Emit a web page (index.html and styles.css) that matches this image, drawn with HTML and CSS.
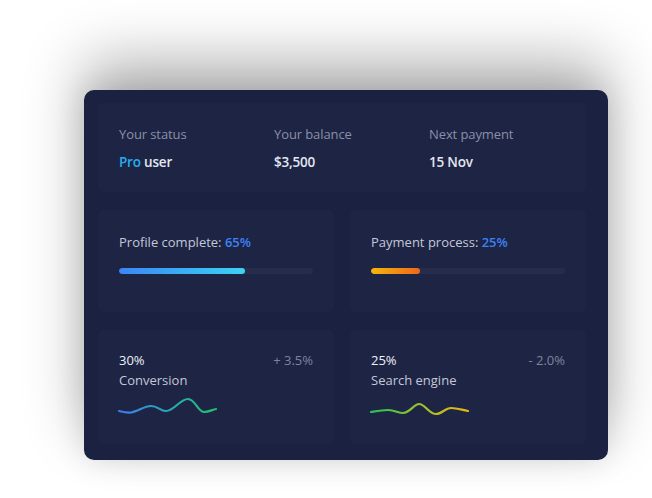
FILE: index.html
```html
<!DOCTYPE html>
<html>
<head>
<meta charset="utf-8">
<link rel="stylesheet" href="styles.css">
</head>
<body>
<div class="stage">
  <div class="card">
    <section class="panel status">
      <div class="col">
        <div class="label">Your status</div>
        <div class="value"><span class="pro">Pro</span> user</div>
      </div>
      <div class="col">
        <div class="label">Your balance</div>
        <div class="value">$3,500</div>
      </div>
      <div class="col">
        <div class="label">Next payment</div>
        <div class="value">15 Nov</div>
      </div>
    </section>
    <div class="grid">
      <section class="panel prog">
        <div class="ptitle">Profile complete: <span class="pct">65%</span></div>
        <div class="track"><div class="fill blue" style="width:65%"></div></div>
      </section>
      <section class="panel prog">
        <div class="ptitle">Payment process: <span class="pct">25%</span></div>
        <div class="track"><div class="fill orange" style="width:25%"></div></div>
      </section>
      <section class="panel stat">
        <div class="row">
          <div class="big">30%</div>
          <div class="delta">+ 3.5%</div>
        </div>
        <div class="name">Conversion</div>
        <svg class="spark" width="100" height="20" viewBox="0 0 100 20">
          <defs>
            <linearGradient id="g1" x1="0" y1="0" x2="1" y2="0">
              <stop offset="0" stop-color="#3b7cf2"/>
              <stop offset="0.5" stop-color="#2aa7b8"/>
              <stop offset="1" stop-color="#22c06a"/>
            </linearGradient>
          </defs>
          <path d="M1 14 C5 15, 9 16, 13 15.5 C20 14.5, 26 9, 33 9 C40 9, 42 14, 48 14 C56 14, 62 2, 70 2 C77 2, 80 15, 86 15 C91 15, 95 12.5, 98 12" fill="none" stroke="url(#g1)" stroke-width="2.2" stroke-linecap="round"/>
        </svg>
      </section>
      <section class="panel stat">
        <div class="row">
          <div class="big">25%</div>
          <div class="delta">- 2.0%</div>
        </div>
        <div class="name">Search engine</div>
        <svg class="spark" width="100" height="20" viewBox="0 0 100 20">
          <defs>
            <linearGradient id="g2" x1="0" y1="0" x2="1" y2="0">
              <stop offset="0" stop-color="#22c35a"/>
              <stop offset="0.5" stop-color="#9cc22a"/>
              <stop offset="1" stop-color="#eab511"/>
            </linearGradient>
          </defs>
          <path d="M1 15 C7 14, 12 13, 18 13 C25 13, 28 16, 33 16 C40 16, 44 7, 49 7 C55 7, 59 17, 66 17 C72 17, 75 11, 81 11 C87 11, 92 13, 98 14" fill="none" stroke="url(#g2)" stroke-width="2.2" stroke-linecap="round"/>
        </svg>
      </section>
    </div>
  </div>
</div>
</body>
</html>
```
FILE: styles.css
```css
* { box-sizing: border-box; }
html, body { margin: 0; padding: 0; background: #ffffff; }
body {
  font-family: "Open Sans", "Noto Sans", sans-serif;
  width: 652px;
  height: 498px;
  overflow: hidden;
}
.stage {
  padding: 90px 0 0 84px;
}
.card {
  width: 524px;
  height: 370px;
  background: #1b2140;
  border-radius: 10px;
  padding: 13px 22px 16px 14px;
  box-shadow: 0 -30px 60px rgba(0, 0, 0, 0.3), 0 0 30px rgba(0,0,0,0.12);
  display: flex;
  flex-direction: column;
  gap: 18px;
}
.panel {
  background: #1e2444;
  border-radius: 5px;
}
.status {
  height: 89px;
  display: flex;
  padding: 22px 21px 0;
}
.col { width: 155px; flex-shrink: 0; }
.label {
  color: #8a90a7;
  font-size: 13px;
  line-height: 18px;
  letter-spacing: -0.1px;
}
.value {
  margin-top: 10px;
  color: #e4e7f0;
  font-size: 13.5px;
  font-weight: 600;
  line-height: 18px;
  letter-spacing: -0.2px;
}
.pro { color: #24aef0; }
.grid {
  display: grid;
  grid-template-columns: 236px 236px;
  grid-template-rows: 102px 114px;
  column-gap: 16px;
  row-gap: 18px;
}
.prog { padding: 23px 21px 0; }
.ptitle {
  color: #c3c8d8;
  font-size: 13px;
  line-height: 18px;
}
.pct { color: #3b82f6; font-weight: 600; }
.track {
  margin-top: 17px;
  width: 194px;
  height: 6px;
  border-radius: 3px;
  background: #262c4a;
  overflow: hidden;
}
.fill { height: 100%; border-radius: 3px; }
.fill.blue { background: linear-gradient(90deg, #3b86f6, #3bd4f2); }
.fill.orange { background: linear-gradient(90deg, #f5b70c, #f0661a); }
.stat { padding: 20px 21px 0; }
.row {
  width: 194px;
  display: flex;
  justify-content: space-between;
}
.big {
  color: #eef0f6;
  font-size: 13px;
  line-height: 20px;
}
.delta {
  color: #7d849d;
  font-size: 13px;
  line-height: 20px;
}
.name {
  color: #c3c8d8;
  font-size: 13px;
  line-height: 20px;
}
.spark {
  display: block;
  margin-top: 7px;
  margin-left: -1px;
}
```
